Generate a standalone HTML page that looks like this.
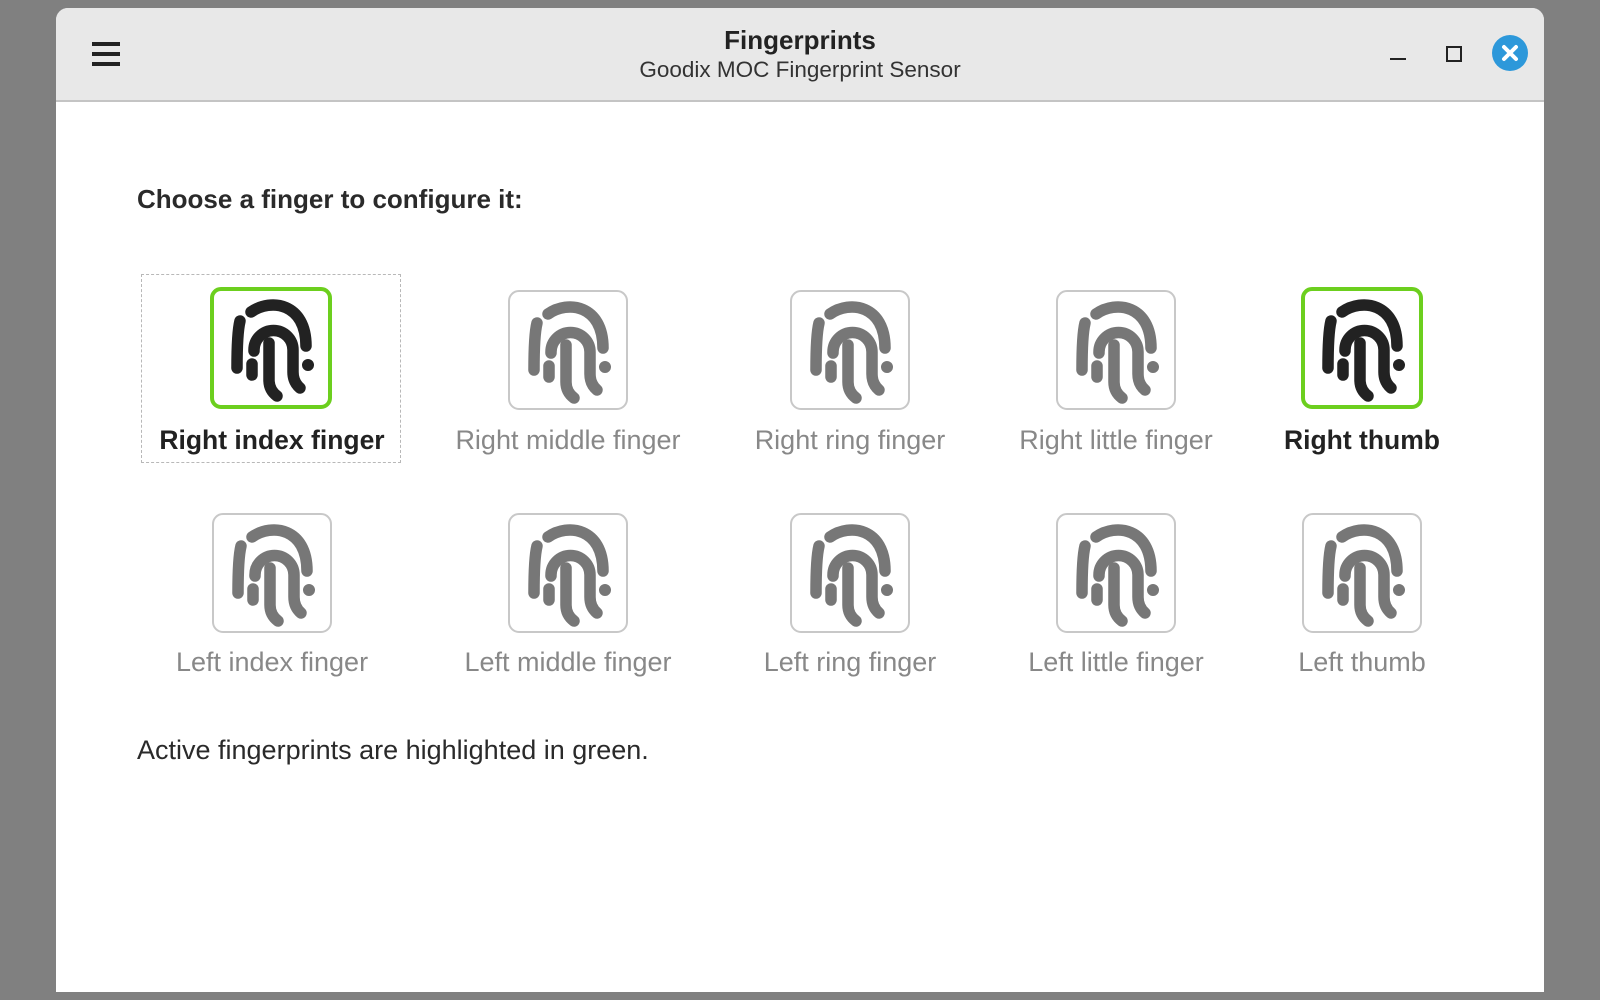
<!DOCTYPE html>
<html><head><meta charset="utf-8"><style>
body{margin:0;width:1600px;height:1000px;background:#808080;position:relative;overflow:hidden;font-family:"Liberation Sans",sans-serif}
.win{position:absolute;left:56px;top:8px;width:1488px;height:984px;background:#fff;border-radius:12px 12px 0 0;overflow:hidden}
.tb{position:absolute;left:0;top:0;width:1488px;height:92px;background:#e8e8e8;border-bottom:2px solid #c4c4c4}
.abs{position:absolute}
.t1{position:absolute;left:0;width:1488px;text-align:center;top:17px;font-weight:bold;font-size:26px;color:#222}
.t2{position:absolute;left:0;width:1488px;text-align:center;top:49px;font-size:22.5px;color:#333}
.box{position:absolute;width:116px;height:116px;border:2px solid #c8c8c8;border-radius:11px;box-sizing:content-box}
.box.on{border:4px solid #6ccf1e;width:114px;height:114px}
.lab{position:absolute;width:320px;text-align:center;font-size:27px;color:#888;line-height:31px}
.lab.b{font-weight:bold;color:#222;font-size:26.5px}
</style></head><body>
<svg width="0" height="0" style="position:absolute"><defs>
<g id="fp" fill="none" stroke-width="11.5" stroke-linecap="round">
<path d="M40,24 C60,10 95,15 95,58"/>
<path d="M29,33 Q26,45 26,80"/>
<path d="M43,63 V62 A19.5,19.5 0 0 1 82,62 V84 Q82,94 89,100"/>
<path d="M58,55 V92 Q58,102 66,108"/>
<path d="M41,76 V87"/>
<circle cx="97" cy="77" r="3" stroke-width="6"/>
</g></defs></svg>
<div class="win">
<div class="tb">
<div class="abs" style="left:36px;top:34px;width:28px;height:4px;background:#222"></div>
<div class="abs" style="left:36px;top:44px;width:28px;height:4px;background:#222"></div>
<div class="abs" style="left:36px;top:54px;width:28px;height:4px;background:#222"></div>
<div class="t1">Fingerprints</div>
<div class="t2">Goodix MOC Fingerprint Sensor</div>
<div class="abs" style="left:1334px;top:50px;width:16px;height:2px;background:#222"></div>
<div class="abs" style="left:1390px;top:38px;width:12px;height:12px;border:2px solid #222"></div>
<div class="abs" style="left:1436px;top:27px;width:36px;height:36px;border-radius:50%;background:#2d98da">
<svg width="36" height="36"><path d="M12,12 L24,24 M24,12 L12,24" stroke="#fff" stroke-width="4" stroke-linecap="round"/></svg></div>
</div>
<div class="abs" style="left:81px;top:176px;font-size:26px;line-height:30px;font-weight:bold;color:#2a2a2a">Choose a finger to configure it:</div>
<div class="abs" style="left:85px;top:266px;width:258px;height:187px;border:1px dashed #b8b8b8"></div>
<div class="box on" style="left:154px;top:279px"><svg width="114" height="114" viewBox="3 3 114 114"><use href="#fp" stroke="#222"/></svg></div>
<div class="box" style="left:452px;top:282px"><svg width="116" height="116" viewBox="2 2 116 116"><use href="#fp" stroke="#777"/></svg></div>
<div class="box" style="left:734px;top:282px"><svg width="116" height="116" viewBox="2 2 116 116"><use href="#fp" stroke="#777"/></svg></div>
<div class="box" style="left:1000px;top:282px"><svg width="116" height="116" viewBox="2 2 116 116"><use href="#fp" stroke="#777"/></svg></div>
<div class="box on" style="left:1245px;top:279px"><svg width="114" height="114" viewBox="3 3 114 114"><use href="#fp" stroke="#222"/></svg></div>
<div class="lab b" style="left:56px;top:417px">Right index finger</div>
<div class="lab" style="left:352px;top:417px">Right middle finger</div>
<div class="lab" style="left:634px;top:417px">Right ring finger</div>
<div class="lab" style="left:900px;top:417px">Right little finger</div>
<div class="lab b" style="left:1146px;top:417px">Right thumb</div>
<div class="box" style="left:156px;top:505px"><svg width="116" height="116" viewBox="2 2 116 116"><use href="#fp" stroke="#777"/></svg></div>
<div class="box" style="left:452px;top:505px"><svg width="116" height="116" viewBox="2 2 116 116"><use href="#fp" stroke="#777"/></svg></div>
<div class="box" style="left:734px;top:505px"><svg width="116" height="116" viewBox="2 2 116 116"><use href="#fp" stroke="#777"/></svg></div>
<div class="box" style="left:1000px;top:505px"><svg width="116" height="116" viewBox="2 2 116 116"><use href="#fp" stroke="#777"/></svg></div>
<div class="box" style="left:1246px;top:505px"><svg width="116" height="116" viewBox="2 2 116 116"><use href="#fp" stroke="#777"/></svg></div>
<div class="lab" style="left:56px;top:639px">Left index finger</div>
<div class="lab" style="left:352px;top:639px">Left middle finger</div>
<div class="lab" style="left:634px;top:639px">Left ring finger</div>
<div class="lab" style="left:900px;top:639px">Left little finger</div>
<div class="lab" style="left:1146px;top:639px">Left thumb</div>
<div class="abs" style="left:81px;top:727px;font-size:27px;line-height:31px;color:#2a2a2a">Active fingerprints are highlighted in green.</div>
</div>
</body></html>
